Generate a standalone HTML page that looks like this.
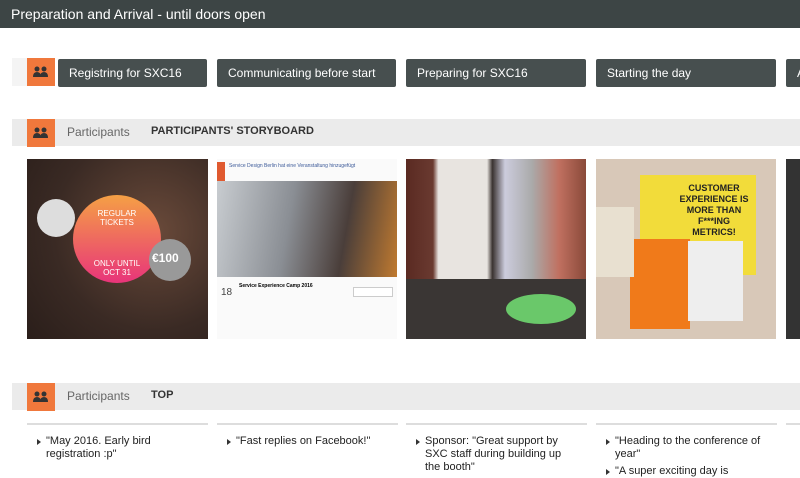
<!DOCTYPE html>
<html><head><meta charset="utf-8"><style>
*{margin:0;padding:0;box-sizing:border-box}
body{width:800px;height:472px;overflow:hidden;background:#fff;font-family:"Liberation Sans",sans-serif;position:relative}
.abs{position:absolute}
.hdr{left:0;top:0;width:800px;height:28px;background:#3d4545;color:#fff;font-size:14px;line-height:28px;padding-left:11px}
.ic{width:28px;height:28px;background:#f0783c}
.ic svg{position:absolute;left:5px;top:7px}
.btn{height:28px;background:#474f4f;color:#fff;font-size:12px;line-height:28px;padding-left:11px;border-radius:2px;white-space:nowrap;overflow:hidden}
.bar{left:12px;width:788px;height:27px;background:#ebebeb}
.lbl{font-size:12px;color:#666}
.ttl{font-size:11px;font-weight:bold;color:#333}
.card{top:423px;width:181px;height:49px;border-top:2px solid #ddd;font-size:11px;color:#222;padding:10px 10px 0 10px;line-height:13px}
.card p{padding-left:9px;position:relative;margin-bottom:4px}
.card p:before{content:"";position:absolute;left:0;top:4px;border-left:4px solid #333;border-top:3px solid transparent;border-bottom:3px solid transparent}
.img{top:159px;height:180px;overflow:hidden}
</style></head><body>
<div class="abs hdr">Preparation and Arrival - until doors open</div>
<div class="abs" style="left:12px;top:58px;width:20px;height:28px;background:#f4f4f4"></div>
<div class="abs ic" style="left:27px;top:58px"><svg width="18" height="14" viewBox="0 0 18 14"><circle cx="5" cy="4" r="2.5" fill="#333"/><circle cx="12" cy="4" r="2.5" fill="#333"/><path d="M1 12 Q1 7 5 7 Q9 7 9 12Z M8 12 Q8 7 12 7 Q16 7 16 12Z" fill="#333"/></svg></div>
<div class="abs btn" style="left:58px;top:59px;width:149px">Registring for SXC16</div>
<div class="abs btn" style="left:217px;top:59px;width:179px">Communicating before start</div>
<div class="abs btn" style="left:406px;top:59px;width:180px">Preparing for SXC16</div>
<div class="abs btn" style="left:596px;top:59px;width:180px">Starting the day</div>
<div class="abs btn" style="left:786px;top:59px;width:30px">A</div>

<div class="abs bar" style="top:119px"></div>
<div class="abs ic" style="left:27px;top:119px"><svg width="18" height="14" viewBox="0 0 18 14"><circle cx="5" cy="4" r="2.5" fill="#333"/><circle cx="12" cy="4" r="2.5" fill="#333"/><path d="M1 12 Q1 7 5 7 Q9 7 9 12Z M8 12 Q8 7 12 7 Q16 7 16 12Z" fill="#333"/></svg></div>
<div class="abs lbl" style="left:67px;top:125px">Participants</div>
<div class="abs ttl" style="left:151px;top:125px">PARTICIPANTS' STORYBOARD</div>

<div class="abs img" style="left:27px;width:181px;background:radial-gradient(circle at 70% 40%,#6a4a3a,#3a2a24 60%,#2a1e1a)">
 <div class="abs" style="left:46px;top:36px;width:88px;height:88px;border-radius:50%;background:linear-gradient(#f5a045,#e8347a)"></div>
 <div class="abs" style="left:10px;top:40px;width:38px;height:38px;border-radius:50%;background:#ddd"></div>
 <div class="abs" style="left:122px;top:80px;width:42px;height:42px;border-radius:50%;background:#999"></div>
 <div class="abs" style="left:64px;top:50px;color:#fff;font-size:8px;text-align:center;width:52px">REGULAR TICKETS</div>
 <div class="abs" style="left:58px;top:100px;color:#fff;font-size:8px;text-align:center;width:64px">ONLY UNTIL OCT 31</div>
 <div class="abs" style="left:125px;top:92px;color:#fff;font-size:12px;font-weight:bold">€100</div>
</div>
<div class="abs img" style="left:217px;width:180px;background:#fafafa">
 <div class="abs" style="left:0;top:3px;width:8px;height:20px;background:#e05a30"></div>
 <div class="abs" style="left:12px;top:4px;font-size:5px;color:#3b5998">Service Design Berlin hat eine Veranstaltung hinzugefügt</div>
 <div class="abs" style="left:0;top:22px;width:180px;height:96px;background:linear-gradient(100deg,#c8ccd0,#8a8e94 40%,#4a3e3a 70%,#c07a30)"></div>
 <div class="abs" style="left:22px;top:124px;font-size:5px;font-weight:bold">Service Experience Camp 2016</div>
 <div class="abs" style="left:4px;top:128px;font-size:10px;color:#444">18</div>
 <div class="abs" style="left:136px;top:128px;width:40px;height:10px;border:1px solid #ccc;background:#fff"></div>
</div>
<div class="abs img" style="left:406px;width:180px;background:linear-gradient(90deg,#5a2a22 0,#6a3a30 15%,#e8e4e0 18%,#e8e4e0 45%,#3a3230 48%,#ccd 55%,#aaa 70%,#c07060 85%,#8a4a3a)">
 <div class="abs" style="left:0;top:120px;width:180px;height:60px;background:#3a3634"></div>
 <div class="abs" style="left:100px;top:135px;width:70px;height:30px;border-radius:50%;background:#6ac86a"></div>
</div>
<div class="abs img" style="left:596px;width:180px;background:#d8c8b8">
 <div class="abs" style="left:44px;top:16px;width:116px;height:100px;background:#f2dc3a"></div>
 <div class="abs" style="left:82px;top:24px;font-size:9px;font-weight:bold;color:#222;text-align:center;width:72px;line-height:11px">CUSTOMER EXPERIENCE IS MORE THAN F***ING METRICS!</div>
 <div class="abs" style="left:34px;top:80px;width:60px;height:90px;background:#f07a1a"></div>
 <div class="abs" style="left:0;top:48px;width:38px;height:70px;background:#e8e0d0"></div>
 <div class="abs" style="left:92px;top:82px;width:55px;height:80px;background:#eee"></div>
</div>
<div class="abs img" style="left:786px;width:14px;background:#333"></div>

<div class="abs bar" style="top:383px"></div>
<div class="abs ic" style="left:27px;top:383px"><svg width="18" height="14" viewBox="0 0 18 14"><circle cx="5" cy="4" r="2.5" fill="#333"/><circle cx="12" cy="4" r="2.5" fill="#333"/><path d="M1 12 Q1 7 5 7 Q9 7 9 12Z M8 12 Q8 7 12 7 Q16 7 16 12Z" fill="#333"/></svg></div>
<div class="abs lbl" style="left:67px;top:389px">Participants</div>
<div class="abs ttl" style="left:151px;top:389px">TOP</div>

<div class="abs card" style="left:27px"><p>"May 2016. Early bird registration :p"</p></div>
<div class="abs card" style="left:217px"><p>"Fast replies on Facebook!"</p></div>
<div class="abs card" style="left:406px"><p>Sponsor: "Great support by SXC staff during building up the booth"</p></div>
<div class="abs card" style="left:596px"><p>"Heading to the conference of year"</p><p>"A super exciting day is</p></div>
<div class="abs card" style="left:786px;width:30px"></div>
</body></html>
